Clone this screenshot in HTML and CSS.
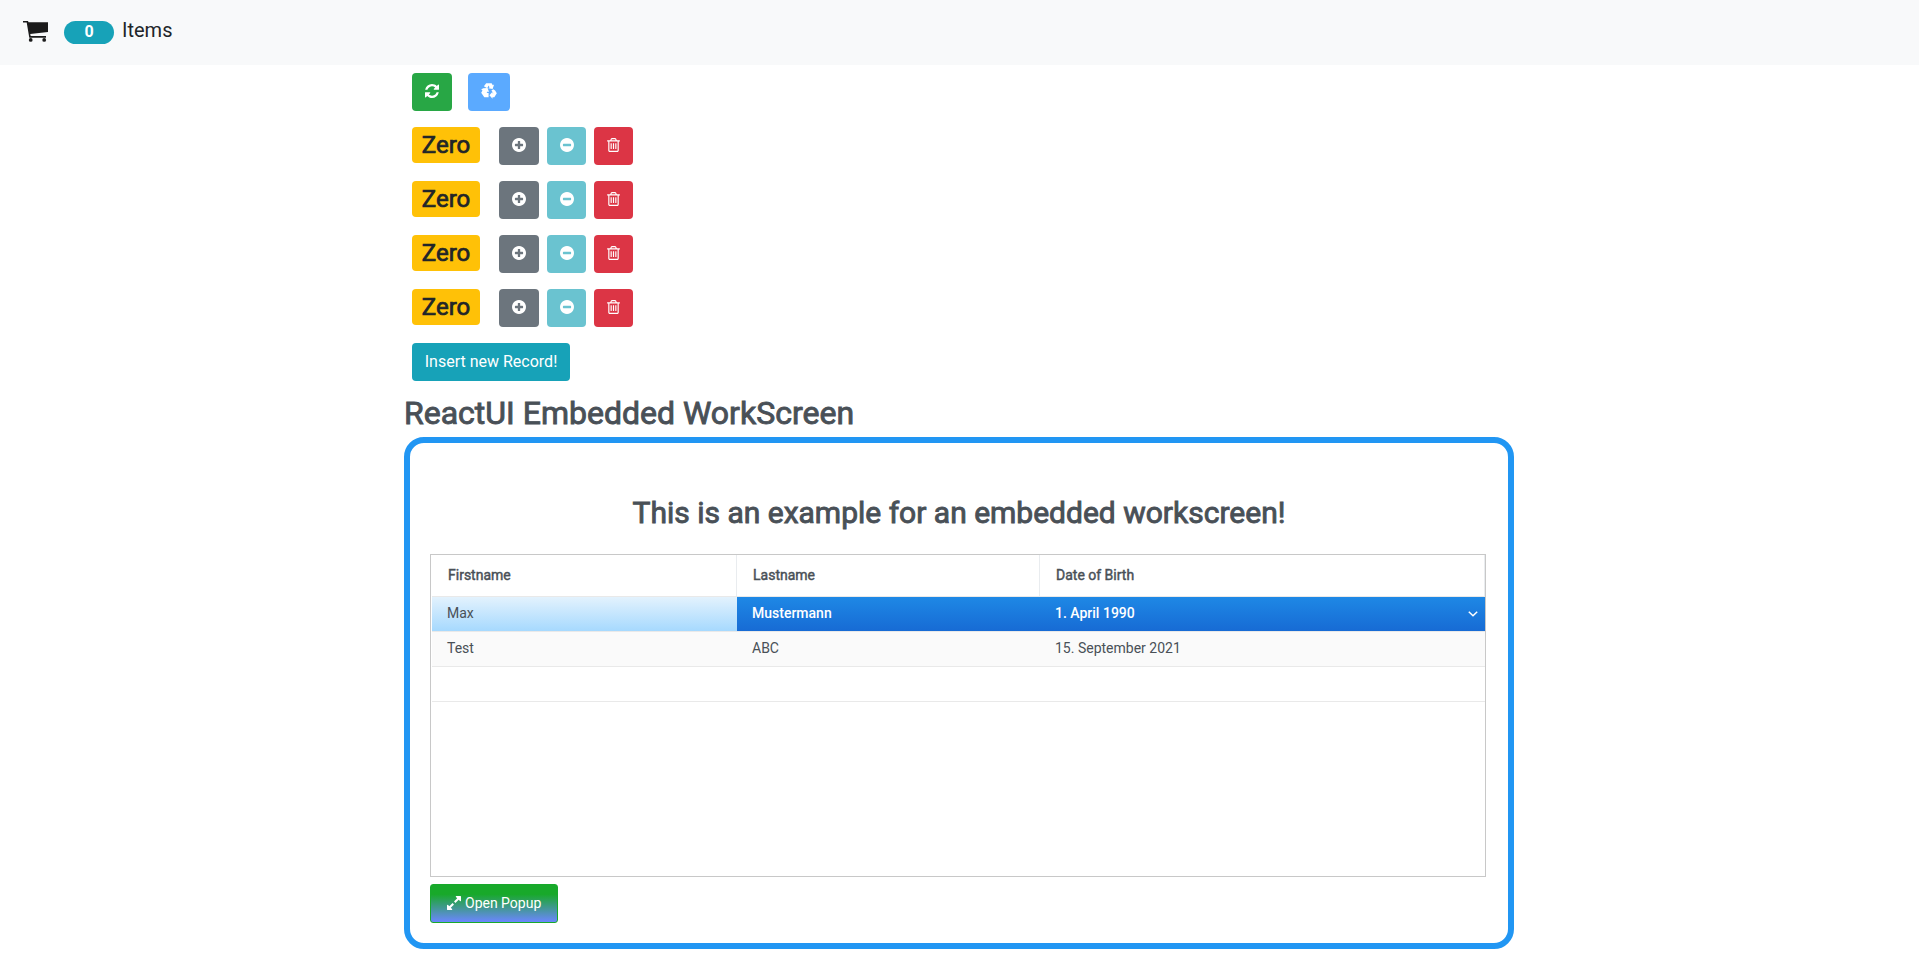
FILE: index.html
```html
<!DOCTYPE html>
<html lang="en"><head><meta charset="utf-8"><title>Items</title><link rel="stylesheet" href="styles.css"></head>
<body>
<svg class="defs" width="0" height="0">
<symbol id="refresh" viewBox="128 128 1536 1536"><path d="M1639 1056q0 5-1 7-64 268-268 434.500t-478 166.500q-146 0-282.500-55t-243.500-157l-129 129q-19 19-45 19t-45-19-19-45v-448q0-26 19-45t45-19h448q26 0 45 19t19 45-19 45l-137 137q71 66 161 102t187 36q134 0 250-65t186-179q11-17 53-117 8-23 30-23h192q13 0 22.500 9.500t9.500 22.500zm25-800v448q0 26-19 45t-45 19h-448q-26 0-45-19t-19-45 19-45l138-138q-148-137-349-137-134 0-250 65t-186 179q-11 17-53 117-8 23-30 23h-199q-13 0-22.500-9.500t-9.500-22.500v-7q65-268 270-434.500t480-166.500q146 0 284 55.500t245 156.500l130-129q19-19 45-19t45 19 19 45z"/></symbol>
<symbol id="plus" viewBox="128 128 1536 1536"><path d="M1344 960v-128q0-26-19-45t-45-19h-256v-256q0-26-19-45t-45-19h-128q-26 0-45 19t-19 45v256h-256q-26 0-45 19t-19 45v128q0 26 19 45t45 19h256v256q0 26 19 45t45 19h128q26 0 45-19t19-45v-256h256q26 0 45-19t19-45zm320-64q0 209-103 385.500t-279.500 279.500-385.500 103-385.500-103-279.500-279.500-103-385.500 103-385.500 279.500-279.500 385.500-103 385.500 103 279.500 279.500 103 385.500z"/></symbol>
<symbol id="minus" viewBox="128 128 1536 1536"><path d="M1344 960v-128q0-26-19-45t-45-19h-768q-26 0-45 19t-19 45v128q0 26 19 45t45 19h768q26 0 45-19t19-45zm320-64q0 209-103 385.500t-279.500 279.500-385.500 103-385.500-103-279.500-279.500-103-385.500 103-385.500 279.500-279.500 385.500-103 385.500 103 279.500 279.500 103 385.500z"/></symbol>
<symbol id="trash" viewBox="192 128 1408 1536"><path d="M704 736v576q0 14-9 23t-23 9h-64q-14 0-23-9t-9-23v-576q0-14 9-23t23-9h64q14 0 23 9t9 23zm256 0v576q0 14-9 23t-23 9h-64q-14 0-23-9t-9-23v-576q0-14 9-23t23-9h64q14 0 23 9t9 23zm256 0v576q0 14-9 23t-23 9h-64q-14 0-23-9t-9-23v-576q0-14 9-23t23-9h64q14 0 23 9t9 23zm128 724v-948h-896v948q0 22 7 40.500t14.500 27 10.500 8.500h832q3 0 10.500-8.500t14.500-27 7-40.500zm-672-1076h448l-48-117q-7-9-17-11h-317q-10 2-17 11zm928 32v64q0 14-9 23t-23 9h-96v948q0 83-47 143.500t-113 60.500h-832q-66 0-113-58.500t-47-141.500v-952h-96q-14 0-23-9t-9-23v-64q0-14 9-23t23-9h309l70-167q15-37 54-63t79-26h320q40 0 79 26t54 63l70 167h309q14 0 23 9t9 23z"/></symbol>
</svg>
<nav class="navbar">
<svg class="cart" viewBox="0 0 26 21"><path d="M0 0h5l.5 1.300H25V11L7.200 13l.5 2H23v1.700H6.300L3.700 1.500H0z"/><circle cx="7.700" cy="18.900" r="1.900"/><circle cx="21.200" cy="18.900" r="1.900"/></svg>
<span class="pill">0</span><span class="items">Items</span>
</nav>
<main class="container">
<div class="counters">
<div class="row tools"><button class="btn green"><svg class="icon"><use href="#refresh"/></svg></button><button class="btn blue"><svg class="recycle" viewBox="0 0 16 16"><path d="M5.200.3h5.400l1.200 2 1.300-.7-1.500 4.300-4.400-.6 1.300-.9L7.700 2.600 6.200 5.200 2.900 3.300zM2.200 5.200l4.300-.2 1.600 4-1.400-.6-1.100 1.700h2v4.200H3.300L.2 9.700l1.300-2.300L.2 6.600zM12.200 6.200l1.900 1.300 1.700 2.700-2.500 4.100h-1.800v1.500L8.400 12.200l3.100-3.500v1.500h.9l-2-2.700z"/></svg></button></div>
<div class="row"><span class="zero">Zero</span><button class="btn gray"><svg class="icon"><use href="#plus"/></svg></button><button class="btn cyan"><svg class="icon"><use href="#minus"/></svg></button><button class="btn red"><svg class="icon bin"><use href="#trash"/></svg></button></div>
<div class="row"><span class="zero">Zero</span><button class="btn gray"><svg class="icon"><use href="#plus"/></svg></button><button class="btn cyan"><svg class="icon"><use href="#minus"/></svg></button><button class="btn red"><svg class="icon bin"><use href="#trash"/></svg></button></div>
<div class="row"><span class="zero">Zero</span><button class="btn gray"><svg class="icon"><use href="#plus"/></svg></button><button class="btn cyan"><svg class="icon"><use href="#minus"/></svg></button><button class="btn red"><svg class="icon bin"><use href="#trash"/></svg></button></div>
<div class="row"><span class="zero">Zero</span><button class="btn gray"><svg class="icon"><use href="#plus"/></svg></button><button class="btn cyan"><svg class="icon"><use href="#minus"/></svg></button><button class="btn red"><svg class="icon bin"><use href="#trash"/></svg></button></div>
<button class="btn insert">Insert new Record!</button>
</div>
<h1 class="title">ReactUI Embedded WorkScreen</h1>
<section class="screen">
<h2 class="subtitle">This is an example for an embedded workscreen!</h2>
<div class="table">
<div class="tr head"><div>Firstname</div><div>Lastname</div><div>Date of Birth</div></div>
<div class="tr selected"><div class="focus">Max</div><div>Mustermann</div><div class="last">1. April 1990<svg class="chevron" viewBox="0 0 10 6"><path d="M.8.8 5 4.800 9.200.8"/></svg></div></div>
<div class="tr odd"><div>Test</div><div>ABC</div><div>15. September 2021</div></div>
<div class="tr"><div></div><div></div><div></div></div>
</div>
<button class="popup"><svg class="expand" viewBox="128 128 1536 1536"><path d="M883 1056q0 13-10 23l-332 332 144 144q19 19 19 45t-19 45-45 19h-448q-26 0-45-19t-19-45v-448q0-26 19-45t45-19 45 19l144 144 332-332q10-10 23-10t23 10l114 114q10 10 10 23zm781-864v448q0 26-19 45t-45 19-45-19l-144-144-332 332q-10 10-23 10t-23-10l-114-114q-10-10-10-23t10-23l332-332-144-144q-19-19-19-45t19-45 45-19h448q26 0 45 19t19 45z"/></svg>Open Popup</button>
</section>
</main>
</body></html>
```
FILE: styles.css
```css
* { box-sizing: border-box; }
body { margin: 0; background: #fff; color: #212529; font: 16px/24px Roboto, sans-serif; }
button { border: 0; font: inherit; color: #fff; padding: 0; }
.defs { display: none; }
.navbar { height: 65px; background: #f8f9fa; display: flex; align-items: flex-start; padding: 21px 0 0 23px; }
.cart { width: 26px; height: 21px; fill: #1b1b1b; }
.pill { width: 50px; height: 23px; margin-left: 15px; border-radius: 12px; background: #17a2b8; color: #fff; font-size: 16px; font-weight: 700; line-height: 22px; text-align: center; }
.items { margin: -6px 0 0 8px; font-size: 20px; line-height: 30px; }
.container { width: 1110px; margin-left: 404px; }
.counters { padding: 8px 0 0 8px; }
.row { display: flex; height: 54px; align-items: flex-start; }
.btn { display: flex; align-items: center; justify-content: center; height: 38px; width: 39px; border-radius: 4px; }
.icon { width: 14px; height: 14px; fill: currentColor; margin-bottom: 2px; }
.bin { width: 13px; }
.green { background: #28a745; width: 40px; }
.blue { background: #5baaff; width: 42px; margin-left: 16px; }
.recycle { width: 16px; height: 16px; fill: #fff; margin-bottom: 2px; }
.zero { width: 68px; height: 36px; margin-right: 19px; border-radius: 4px; background: #ffc107; font-size: 24px; line-height: 36px; text-align: center; -webkit-text-stroke: .7px #212529; }
.gray { background: #6c757d; width: 40px; }
.cyan { background: #6ac3d0; margin: 0 8px; }
.red { background: #dc3545; }
.insert { width: 158px; background: #17a2b8; }
.title { margin: 13px 0 5px; font-size: 32px; line-height: 38px; font-weight: 400; color: #495057; -webkit-text-stroke: .9px #495057; }
.screen { height: 512px; border: 6px solid #2196f3; border-radius: 20px; padding: 50px 22px 0 20px; }
.subtitle { margin: 0 0 21px 2px; text-align: center; font-size: 30px; line-height: 40px; font-weight: 400; color: #495057; -webkit-text-stroke: .9px #495057; }
.table { height: 323px; border: 1px solid #c8c8c8; padding-left: 1px; font-size: 14px; color: #495057; }
.tr { display: grid; grid-template-columns: 305px 303px 1fr; height: 35px; line-height: 33px; border-bottom: 1px solid #e9e9e9; }
.tr > div { padding-left: 15px; }
.head { height: 42px; line-height: 41px; -webkit-text-stroke: .45px #495057; }
.tr.head > div { padding-left: 16px; border-right: 1px solid #e9ecef; }
.selected { background: linear-gradient(#1e88e5, #176bd4); color: #fff; font-weight: 500; }
.selected .focus { background: linear-gradient(#e3f2fd, #a6d9fe); color: #495057; font-weight: 400; }
.tr > .last { display: flex; align-items: flex-start; justify-content: space-between; padding-right: 7px; }
.chevron { width: 10px; height: 6px; margin-top: 14px; fill: none; stroke: #fff; stroke-width: 1.5; }
.odd { background: #fafafa; }
.popup { display: flex; align-items: center; width: 128px; height: 39px; margin-top: 7px; padding: 0 0 1px 16px; border: 1px solid #17a92b; border-radius: 3px; background: linear-gradient(#18a92a 25%, #6c86ff); font-size: 14px; }
.expand { width: 14px; height: 14px; margin-right: 4px; fill: #fff; }
```
